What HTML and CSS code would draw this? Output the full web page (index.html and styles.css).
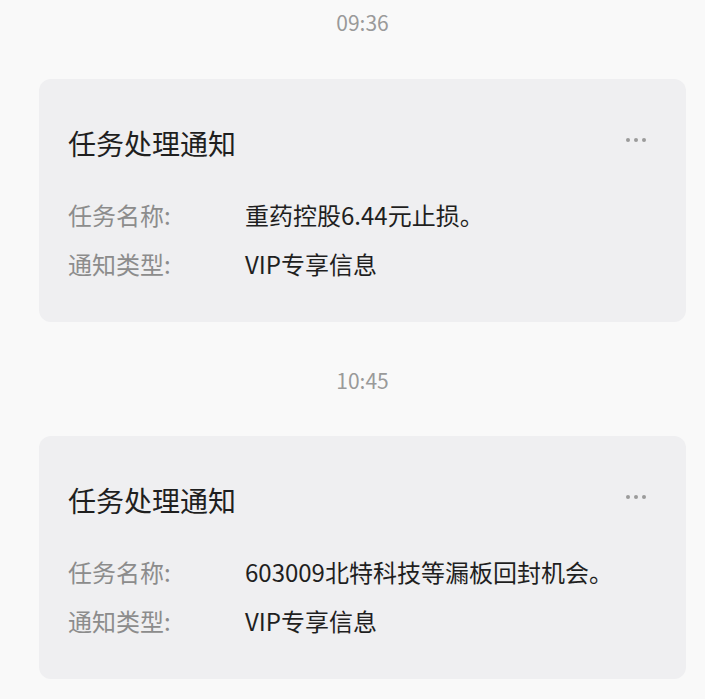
FILE: index.html
```html
<!DOCTYPE html>
<html lang="zh-CN">
<head>
<meta charset="utf-8">
<title>任务处理通知</title>
<link rel="stylesheet" href="styles.css">
</head>
<body>
<div class="feed">
  <div class="time first">09:36</div>
  <div class="card">
    <div class="card-head">
      <div class="title">任务处理通知</div>
      <div class="more"><span></span><span></span><span></span></div>
    </div>
    <div class="rows">
      <div class="label">任务名称:</div><div class="value">重药控股6.44元止损。</div>
      <div class="label">通知类型:</div><div class="value">VIP专享信息</div>
    </div>
  </div>
  <div class="time">10:45</div>
  <div class="card">
    <div class="card-head">
      <div class="title">任务处理通知</div>
      <div class="more"><span></span><span></span><span></span></div>
    </div>
    <div class="rows">
      <div class="label">任务名称:</div><div class="value">603009北特科技等漏板回封机会。</div>
      <div class="label">通知类型:</div><div class="value">VIP专享信息</div>
    </div>
  </div>
</div>
</body>
</html>
```
FILE: styles.css
```css
html, body {
  margin: 0;
  padding: 0;
  background: #f9f9f9;
}
body {
  font-family: "Noto Sans CJK SC", "Noto Sans", sans-serif;
  color: #222;
}
.feed {
  display: flex;
  flex-direction: column;
  padding: 0 19px 0 39px;
}
.time {
  text-align: center;
  font-size: 21px;
  line-height: 44px;
  color: #9a9a9a;
  margin: 36px 0 34px;
}
.time.first {
  margin-top: 0;
  margin-bottom: 35px;
}
.card {
  background: #efeff1;
  border-radius: 12px;
  height: 243px;
  box-sizing: border-box;
  padding: 44px 40px 0 29px;
}
.card-head {
  display: flex;
  align-items: center;
  justify-content: space-between;
  height: 40px;
}
.title {
  font-size: 28px;
  line-height: 40px;
  color: #1f1f1f;
}
.more {
  display: flex;
  gap: 4px;
  margin-top: -6px;
}
.more span {
  width: 4px;
  height: 4px;
  border-radius: 50%;
  background: #9b9b9b;
}
.rows {
  display: grid;
  grid-template-columns: 177px 1fr;
  margin-top: 27px;
  font-size: 24px;
  line-height: 49px;
}
.label {
  color: #8c8c8c;
}
.value {
  color: #1f1f1f;
}
```
